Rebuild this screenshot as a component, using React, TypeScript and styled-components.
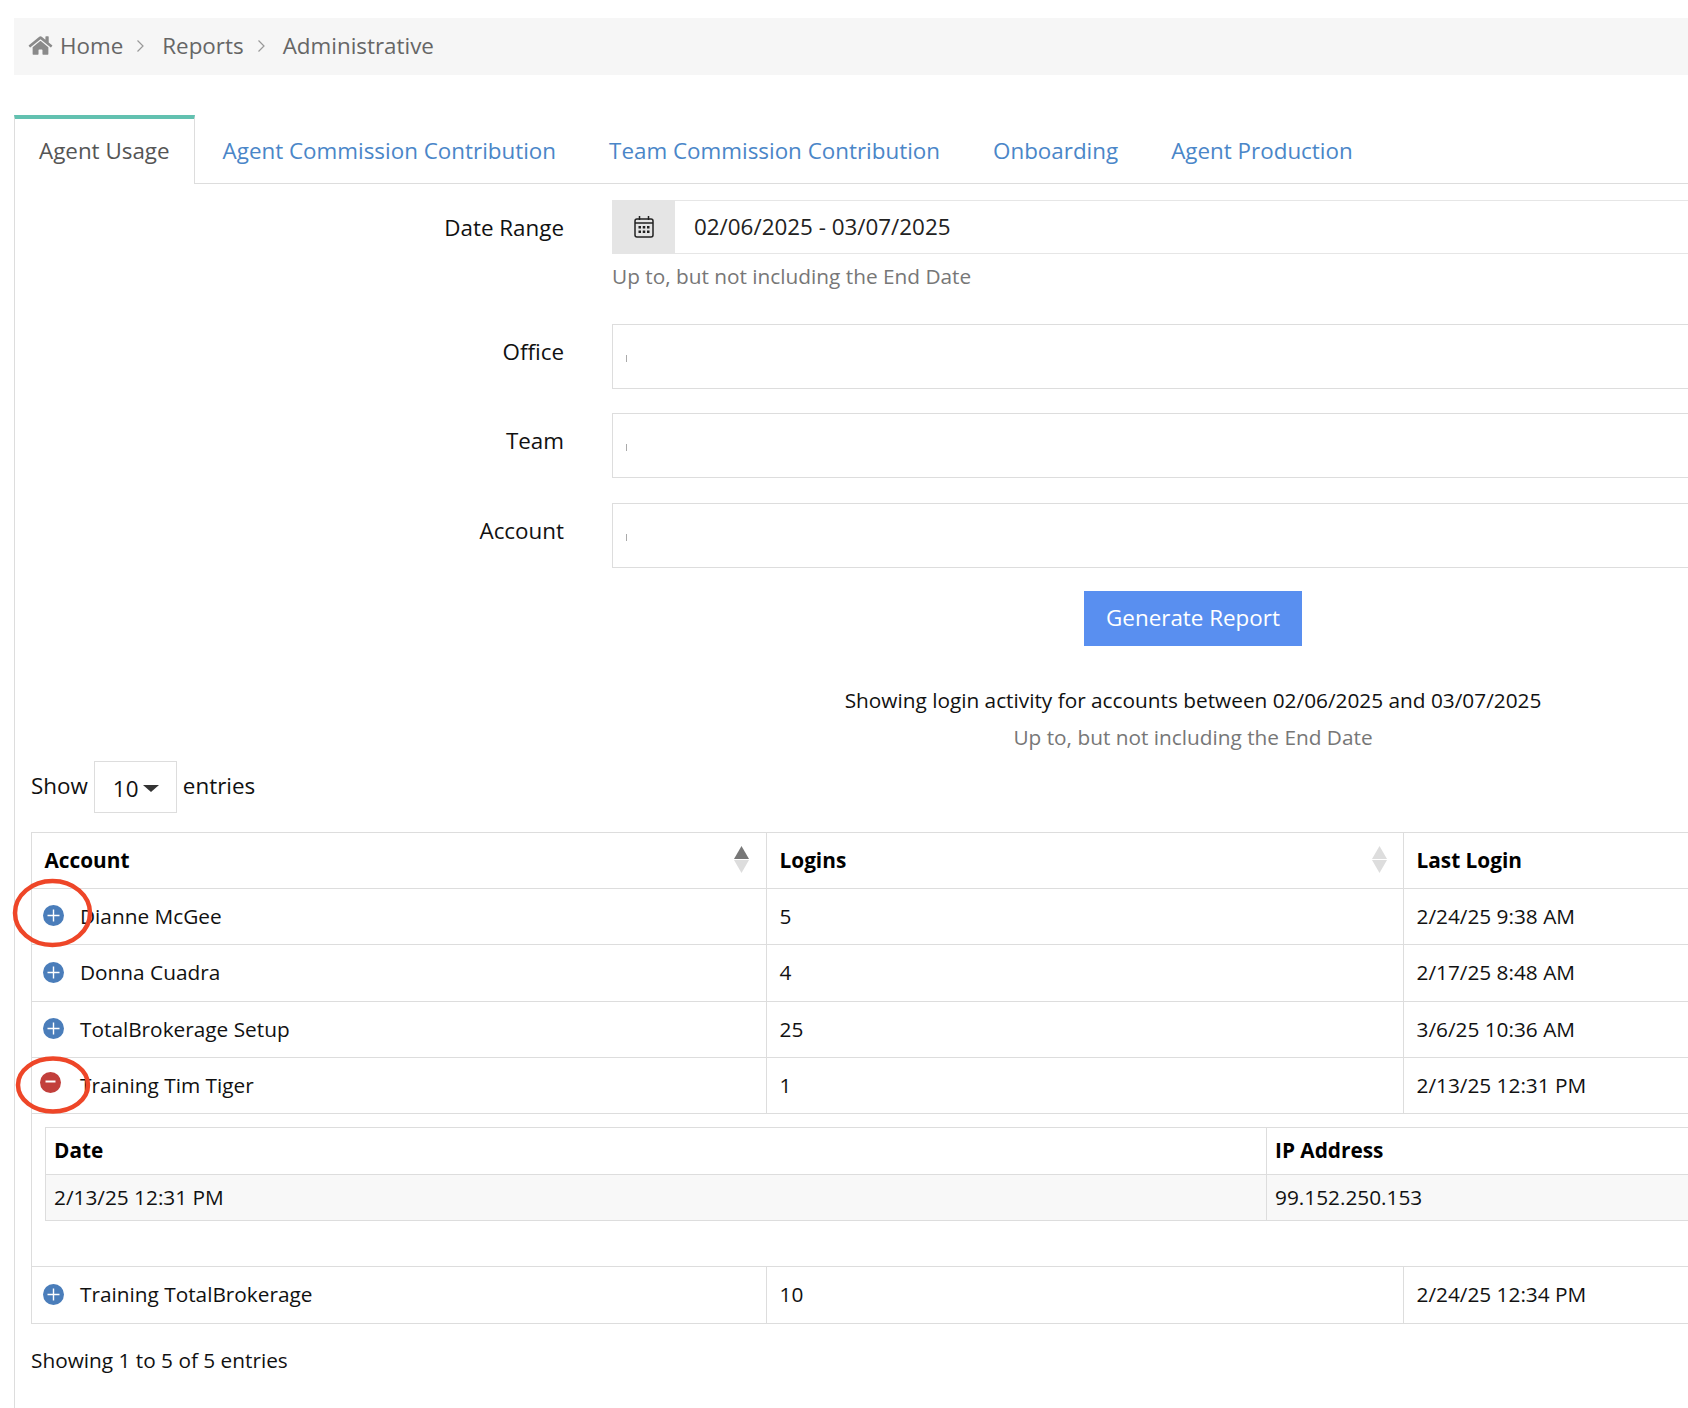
import React from "react";
import styled, { createGlobalStyle } from "styled-components";

const Global = createGlobalStyle`
  html, body { margin: 0; padding: 0; background: #fff; overflow: hidden; }
  body { font-family: "Open Sans", "Noto Sans", sans-serif; font-size: 20.8px; line-height: 30px; color: #111; }
  * { box-sizing: border-box; }
`;

const Page = styled.div`
  position: relative;
  width: 1688px;
  height: 1408px;
  overflow: hidden;
  padding: 18px 0 0 14px;
`;

const Crumbs = styled.nav`
  display: flex;
  align-items: center;
  width: 1900px;
  height: 57px;
  background: #f6f6f6;
  padding: 0 0 2px 15px;
  color: #666;
  font-size: 22.4px;
`;

const CrumbSep = styled.svg`
  width: 9px;
  height: 14px;
  margin: 1px 17px 0 13px;
  fill: none;
  stroke: #999;
  stroke-width: 1.2;
`;

const HomeIcon = styled.svg`
  width: 25px;
  height: 21px;
  margin: 0 7px 0 -1px;
  fill: #8a8a8a;
`;

const Tabs = styled.ul`
  display: flex;
  width: 1900px;
  height: 69px;
  margin: 40px 0 0;
  padding: 0;
  list-style: none;
  border-bottom: 1px solid #ddd;
  font-size: 22.4px;
`;

const Tab = styled.li<{ $active?: boolean }>`
  height: ${(p) => (p.$active ? "69px" : "68px")};
  padding: ${(p) => (p.$active ? "17px 24px 0" : "21px 25px 0")};
  margin-right: 3px;
  color: ${(p) => (p.$active ? "#555" : "#4a86c8")};
  background: #fff;
  white-space: nowrap;
  ${(p) =>
    p.$active
      ? `border-top: 4px solid #62c1b0; border-left: 1px solid #ddd; border-right: 1px solid #ddd;`
      : ""}
`;

const Content = styled.section`
  width: 1900px;
  height: 1225px;
  border-left: 1px solid #ddd;
  padding: 16px 0 0 16px;
`;

const FormRow = styled.div<{ $gap: number }>`
  display: flex;
  margin-bottom: ${(p) => p.$gap}px;
`;

const Label = styled.label`
  width: 533px;
  flex: none;
  text-align: right;
  padding-top: 13px;
  color: #111;
  font-size: 22.4px;
`;

const Field = styled.div`
  width: 1160px;
  margin-left: 48px;
  flex: none;
`;

const InputGroup = styled.div`
  display: flex;
  height: 54px;
  border-top: 1px solid #e6e6e6;
  border-bottom: 1px solid #e6e6e6;
`;

const Addon = styled.span`
  display: flex;
  align-items: center;
  justify-content: center;
  width: 63px;
  margin: -1px 0;
  background: #e5e5e5;
`;

const DateValue = styled.span`
  padding: 11px 0 0 19px;
  color: #222;
  font-size: 22.4px;
`;

const Help = styled.p`
  margin: 7px 0 0;
  color: #777;
`;

const SelectBox = styled.div`
  display: flex;
  align-items: center;
  height: 65px;
  padding-left: 13px;
  border: 1px solid #ddd;
`;

const Cursor = styled.i`
  display: block;
  width: 1px;
  height: 7px;
  margin-top: 3px;
  background: #aaa;
`;

const Actions = styled.div`
  width: 1160px;
  margin-left: 582px;
  text-align: center;
`;

const Button = styled.button`
  width: 218px;
  height: 55px;
  border: 0;
  padding: 0 0 2px;
  background: #598ff0;
  color: #fff;
  font: inherit;
  font-size: 22.4px;
`;

const Summary = styled.p`
  margin: 39px 0 0;
  color: #111;
`;

const SummaryHelp = styled.p`
  margin: 7px 0 0;
  color: #777;
`;

const Length = styled.div`
  display: flex;
  align-items: center;
  height: 52px;
  margin-top: 9px;
  font-size: 22.4px;
`;

const LengthText = styled.span`
  margin-top: -2px;
`;

const LengthSelect = styled.span`
  display: flex;
  align-items: center;
  width: 83px;
  height: 52px;
  margin: 0 6px;
  padding: 4px 0 0 18px;
  border: 1px solid #ddd;
`;

const Caret = styled.i`
  width: 0;
  height: 0;
  margin: 0 0 2px 5px;
  border-left: 8px solid transparent;
  border-right: 8px solid transparent;
  border-top: 7px solid #333;
`;

const Table = styled.table`
  width: 1840px;
  margin-top: 19px;
  table-layout: fixed;
  border-collapse: collapse;
`;

const Row = styled.tr<{ $h: number }>`
  height: ${(p) => p.$h}px;
`;

const HeadCell = styled.th<{ $w?: number }>`
  position: relative;
  width: ${(p) => (p.$w ? `${p.$w}px` : "auto")};
  padding: 0 12.5px 2px;
  border: 1px solid #ddd;
  text-align: left;
  font-weight: 700;
  color: #000;
`;

const Cell = styled.td`
  padding: 0 12.5px 2px;
  border: 1px solid #ddd;
  color: #111;
`;

const DetailCell = styled.td`
  padding: 13px 0 0 13px;
  border: 1px solid #ddd;
  vertical-align: top;
`;

const NameWrap = styled.div`
  display: flex;
  align-items: center;
`;

const Toggle = styled.svg<{ $open?: boolean }>`
  width: 21px;
  height: 21px;
  flex: none;
  margin: ${(p) => (p.$open ? "-5px 19px 0 -4.5px" : "0 16px 0 -1.5px")};
`;

const SortMark = styled.svg<{ $right: number }>`
  position: absolute;
  right: ${(p) => p.$right}px;
  top: 13px;
  width: 15px;
  height: 27px;
`;

const SubTable = styled.table`
  width: 1900px;
  table-layout: fixed;
  border-collapse: collapse;
`;

const SubHead = styled.th<{ $w?: number }>`
  width: ${(p) => (p.$w ? `${p.$w}px` : "auto")};
  height: 47px;
  padding: 0 8px 2px;
  border: 1px solid #ddd;
  text-align: left;
  font-weight: 700;
  color: #000;
`;

const SubCell = styled.td`
  height: 46px;
  padding: 0 8px 2px;
  border: 1px solid #ddd;
  background: #f8f8f8;
  color: #111;
`;

const Footer = styled.div`
  margin-top: 21px;
  color: #111;
`;

const Marks = styled.svg`
  position: absolute;
  left: 0;
  top: 870px;
  width: 110px;
  height: 260px;
  pointer-events: none;
`;

const Sep = () => (
  <CrumbSep viewBox="0 0 9 14">
    <path d="M1.5 1.5 7 7l-5.5 5.5" />
  </CrumbSep>
);

const Plus = () => (
  <Toggle viewBox="0 0 21 21">
    <circle cx="10.5" cy="10.5" r="10.5" fill="#4a7dba" />
    <path d="M10.5 4.5v12M4.5 10.5h12" stroke="#fff" strokeWidth="1.4" />
  </Toggle>
);

const Minus = () => (
  <Toggle $open viewBox="0 0 21 21">
    <circle cx="10.5" cy="10.5" r="10.5" fill="#c23f3b" />
    <path d="M5.5 9.5h10" stroke="#fff" strokeWidth="2" />
  </Toggle>
);

const Sort = ({ up, down, right }: { up: string; down: string; right: number }) => (
  <SortMark $right={right} viewBox="0 0 15 27">
    <path d="M7.5 0 15 13H0z" fill={up} />
    <path d="M0 14h15L7.5 27z" fill={down} />
  </SortMark>
);

const Name = ({ open, children }: { open?: boolean; children: React.ReactNode }) => (
  <NameWrap>
    {open ? <Minus /> : <Plus />}
    <span>{children}</span>
  </NameWrap>
);

export default function App() {
  return (
    <Page>
      <Global />
      <Crumbs>
        <HomeIcon viewBox="0 0 576 512">
          <path d="M280.4 148.3 96 300.1V464a16 16 0 0 0 16 16l112-.3a16 16 0 0 0 15.9-16V368a16 16 0 0 1 16-16h64a16 16 0 0 1 16 16v95.6a16 16 0 0 0 16 16l112 .4a16 16 0 0 0 16-16V300L295.700 148.300a12.200 12.200 0 0 0-15.300 0zM571.600 251.500 488 182.600V44.100a12 12 0 0 0-12-12h-56a12 12 0 0 0-12 12v72.600L318.500 43a48 48 0 0 0-61 0L4.300 251.500a12 12 0 0 0-1.600 16.900l25.500 31A12 12 0 0 0 45.200 301l235.200-193.700a12.200 12.200 0 0 1 15.300 0L530.900 301a12 12 0 0 0 16.900-1.600l25.500-31a12 12 0 0 0-1.700-16.900z" />
        </HomeIcon>
        <span>Home</span>
        <Sep />
        <span>Reports</span>
        <Sep />
        <span>Administrative</span>
      </Crumbs>

      <Tabs>
        <Tab $active>Agent Usage</Tab>
        <Tab>Agent Commission Contribution</Tab>
        <Tab>Team Commission Contribution</Tab>
        <Tab>Onboarding</Tab>
        <Tab>Agent Production</Tab>
      </Tabs>

      <Content>
        <FormRow $gap={33}>
          <Label>Date Range</Label>
          <Field>
            <InputGroup>
              <Addon>
                <svg width="20" height="22" viewBox="0 0 20 22" fill="none" stroke="#222" strokeWidth="1.5">
                  <rect x="1" y="3" width="18" height="18" rx="2" />
                  <path d="M1 7h18M5.500 0v4M14.500 0v4" />
                  <g fill="#222" stroke="none">
                    <rect x="4.500" y="10" width="2.500" height="2.500" />
                    <rect x="8.750" y="10" width="2.500" height="2.500" />
                    <rect x="13" y="10" width="2.500" height="2.500" />
                    <rect x="4.500" y="14.500" width="2.500" height="2.500" />
                    <rect x="8.750" y="14.500" width="2.500" height="2.500" />
                    <rect x="13" y="14.500" width="2.500" height="2.500" />
                  </g>
                </svg>
              </Addon>
              <DateValue>02/06/2025 - 03/07/2025</DateValue>
            </InputGroup>
            <Help>Up to, but not including the End Date</Help>
          </Field>
        </FormRow>
        <FormRow $gap={24}>
          <Label>Office</Label>
          <Field>
            <SelectBox>
              <Cursor />
            </SelectBox>
          </Field>
        </FormRow>
        <FormRow $gap={25}>
          <Label>Team</Label>
          <Field>
            <SelectBox>
              <Cursor />
            </SelectBox>
          </Field>
        </FormRow>
        <FormRow $gap={23}>
          <Label>Account</Label>
          <Field>
            <SelectBox>
              <Cursor />
            </SelectBox>
          </Field>
        </FormRow>
        <Actions>
          <Button>Generate Report</Button>
          <Summary>Showing login activity for accounts between 02/06/2025 and 03/07/2025</Summary>
          <SummaryHelp>Up to, but not including the End Date</SummaryHelp>
        </Actions>

        <Length>
          <LengthText>Show</LengthText>
          <LengthSelect>
            10
            <Caret />
          </LengthSelect>
          <LengthText>entries</LengthText>
        </Length>

        <Table>
          <thead>
            <Row $h={56}>
              <HeadCell $w={735}>
                Account
                <Sort up="#777" down="#ddd" right={17.5} />
              </HeadCell>
              <HeadCell $w={637}>
                Logins
                <Sort up="#ddd" down="#ddd" right={16.5} />
              </HeadCell>
              <HeadCell>Last Login</HeadCell>
            </Row>
          </thead>
          <tbody>
            <Row $h={56}>
              <Cell><Name>Dianne McGee</Name></Cell>
              <Cell>5</Cell>
              <Cell>2/24/25 9:38 AM</Cell>
            </Row>
            <Row $h={57}>
              <Cell><Name>Donna Cuadra</Name></Cell>
              <Cell>4</Cell>
              <Cell>2/17/25 8:48 AM</Cell>
            </Row>
            <Row $h={56}>
              <Cell><Name>TotalBrokerage Setup</Name></Cell>
              <Cell>25</Cell>
              <Cell>3/6/25 10:36 AM</Cell>
            </Row>
            <Row $h={56}>
              <Cell><Name open>Training Tim Tiger</Name></Cell>
              <Cell>1</Cell>
              <Cell>2/13/25 12:31 PM</Cell>
            </Row>
            <Row $h={153}>
              <DetailCell colSpan={3}>
                <SubTable>
                  <thead>
                    <tr>
                      <SubHead $w={1221}>Date</SubHead>
                      <SubHead>IP Address</SubHead>
                    </tr>
                  </thead>
                  <tbody>
                    <tr>
                      <SubCell>2/13/25 12:31 PM</SubCell>
                      <SubCell>99.152.250.153</SubCell>
                    </tr>
                  </tbody>
                </SubTable>
              </DetailCell>
            </Row>
            <Row $h={57}>
              <Cell><Name>Training TotalBrokerage</Name></Cell>
              <Cell>10</Cell>
              <Cell>2/24/25 12:34 PM</Cell>
            </Row>
          </tbody>
        </Table>

        <Footer>Showing 1 to 5 of 5 entries</Footer>
      </Content>

      <Marks viewBox="0 0 110 260" fill="none" stroke="#ee4628" strokeWidth="4.5">
        <ellipse cx="52.500" cy="43" rx="37.500" ry="32" />
        <ellipse cx="53" cy="215" rx="35" ry="26.500" />
      </Marks>
    </Page>
  );
}
